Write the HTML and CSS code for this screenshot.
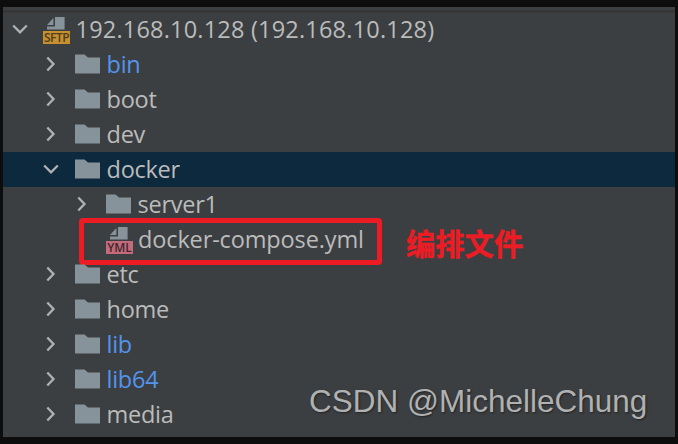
FILE: index.html
```html
<!DOCTYPE html>
<html lang="zh">
<head>
<meta charset="utf-8">
<title>Remote Host</title>
<link rel="stylesheet" href="styles.css">
</head>
<body>
<svg width="0" height="0" class="defs">
  <symbol id="right" viewBox="0 0 16 16"><path d="M4.300 1.500 10.500 8l-6.200 6.500" class="stroke"/></symbol>
  <symbol id="down" viewBox="0 0 16 16"><path d="M1.200 4.500 8 11.300l6.800-6.800" class="stroke"/></symbol>
  <symbol id="folder" viewBox="0 0 25 20"><path d="M0 .5h9.500L13 3.500h12v16H0z" class="gray"/></symbol>
  <symbol id="file" viewBox="0 0 27 14"><path d="M12 0h9.600v12.500H4V9.500h8zM10.400 1v7H4z" class="gray"/></symbol>
</svg>
<main class="panel">
  <ul class="tree">
    <li class="row root"><svg class="chev"><use href="#down"/></svg><span class="ficon"><svg><use href="#file"/></svg><b class="sftp">SFTP</b></span><span class="name host">192.168.10.128 (192.168.10.128)</span></li>
    <li class="row"><svg class="chev"><use href="#right"/></svg><svg class="folder"><use href="#folder"/></svg><span class="name link">bin</span></li>
    <li class="row"><svg class="chev"><use href="#right"/></svg><svg class="folder"><use href="#folder"/></svg><span class="name">boot</span></li>
    <li class="row"><svg class="chev"><use href="#right"/></svg><svg class="folder"><use href="#folder"/></svg><span class="name">dev</span></li>
    <li class="row selected"><svg class="chev"><use href="#down"/></svg><svg class="folder"><use href="#folder"/></svg><span class="name">docker</span></li>
    <li class="row child"><svg class="chev"><use href="#right"/></svg><svg class="folder"><use href="#folder"/></svg><span class="name">server1</span></li>
    <li class="row child leaf"><span class="ficon"><svg><use href="#file"/></svg><b class="yml">YML</b></span><span class="name compose">docker-compose.yml</span><span class="frame"></span><strong class="note">编排文件</strong></li>
    <li class="row"><svg class="chev"><use href="#right"/></svg><svg class="folder"><use href="#folder"/></svg><span class="name">etc</span></li>
    <li class="row"><svg class="chev"><use href="#right"/></svg><svg class="folder"><use href="#folder"/></svg><span class="name">home</span></li>
    <li class="row"><svg class="chev"><use href="#right"/></svg><svg class="folder"><use href="#folder"/></svg><span class="name link">lib</span></li>
    <li class="row"><svg class="chev"><use href="#right"/></svg><svg class="folder"><use href="#folder"/></svg><span class="name link">lib64</span></li>
    <li class="row"><svg class="chev"><use href="#right"/></svg><svg class="folder"><use href="#folder"/></svg><span class="name">media</span></li>
  </ul>
  <div class="watermark">CSDN @MichelleChung</div>
</main>
</body>
</html>
```
FILE: styles.css
```css
* { box-sizing: border-box; }
body { margin: 0; height: 444px; padding: 7px 3px; background: #0d0d0d; overflow: hidden; }
.defs { position: absolute; }
.stroke { fill: none; stroke: #afb1b3; stroke-width: 2.3; }
.gray { fill: #87939a; }
.panel { position: relative; height: 430px; padding-top: 5px; background: linear-gradient(#3c3f41 3px, #343434 4px, #343434 5px, #3c3f41 6px); }
.tree { list-style: none; margin: 0; padding: 0; }
.row { position: relative; display: flex; align-items: center; height: 35px; padding-left: 40px; font: 23.5px/35px "Open Sans", "Noto Sans", sans-serif; color: #bbbbbb; white-space: nowrap; }
.root { padding-left: 9px; }
.child { padding-left: 71px; }
.leaf { padding-left: 103px; }
.selected { background: #0d293e; }
.chev { width: 16px; height: 16px; margin-right: 16px; position: relative; top: -1px; }
.root .chev { margin-right: 15px; }
.folder { width: 25px; height: 20px; margin-right: 6.500px; position: relative; top: -.5px; }
.name { letter-spacing: -.25px; }
.host { letter-spacing: .2px; }
.compose { letter-spacing: -.13px; }
.link { color: #5394ec; }
.ficon { width: 27px; height: 27px; margin-right: 5.500px; display: flex; flex-direction: column; position: relative; top: .5px; }
.leaf .ficon { margin-right: 5px; }
.ficon svg { width: 27px; height: 14px; }
.ficon b { height: 13px; font: 600 12px/13px "Open Sans", sans-serif; text-align: center; }
.sftp { background: #c6902f; color: #4f3d1d; letter-spacing: -.5px; }
.yml { background: #c36b7a; color: #3d2730; }
.frame { position: absolute; left: 76px; top: -4px; width: 303px; height: 47px; border: 5px solid #ed1c24; border-radius: 4px; }
.note { position: absolute; left: 403px; top: 0; font: 700 29.3px/40px "Noto Sans CJK SC", sans-serif; color: #ed1c24; -webkit-text-stroke: .4px #ed1c24; }
.watermark { position: absolute; left: 306px; top: 374px; font: 31.5px/40px "Liberation Sans", sans-serif; color: #b0b1b2; text-shadow: 1px 1px 2px #222; white-space: nowrap; }
```
